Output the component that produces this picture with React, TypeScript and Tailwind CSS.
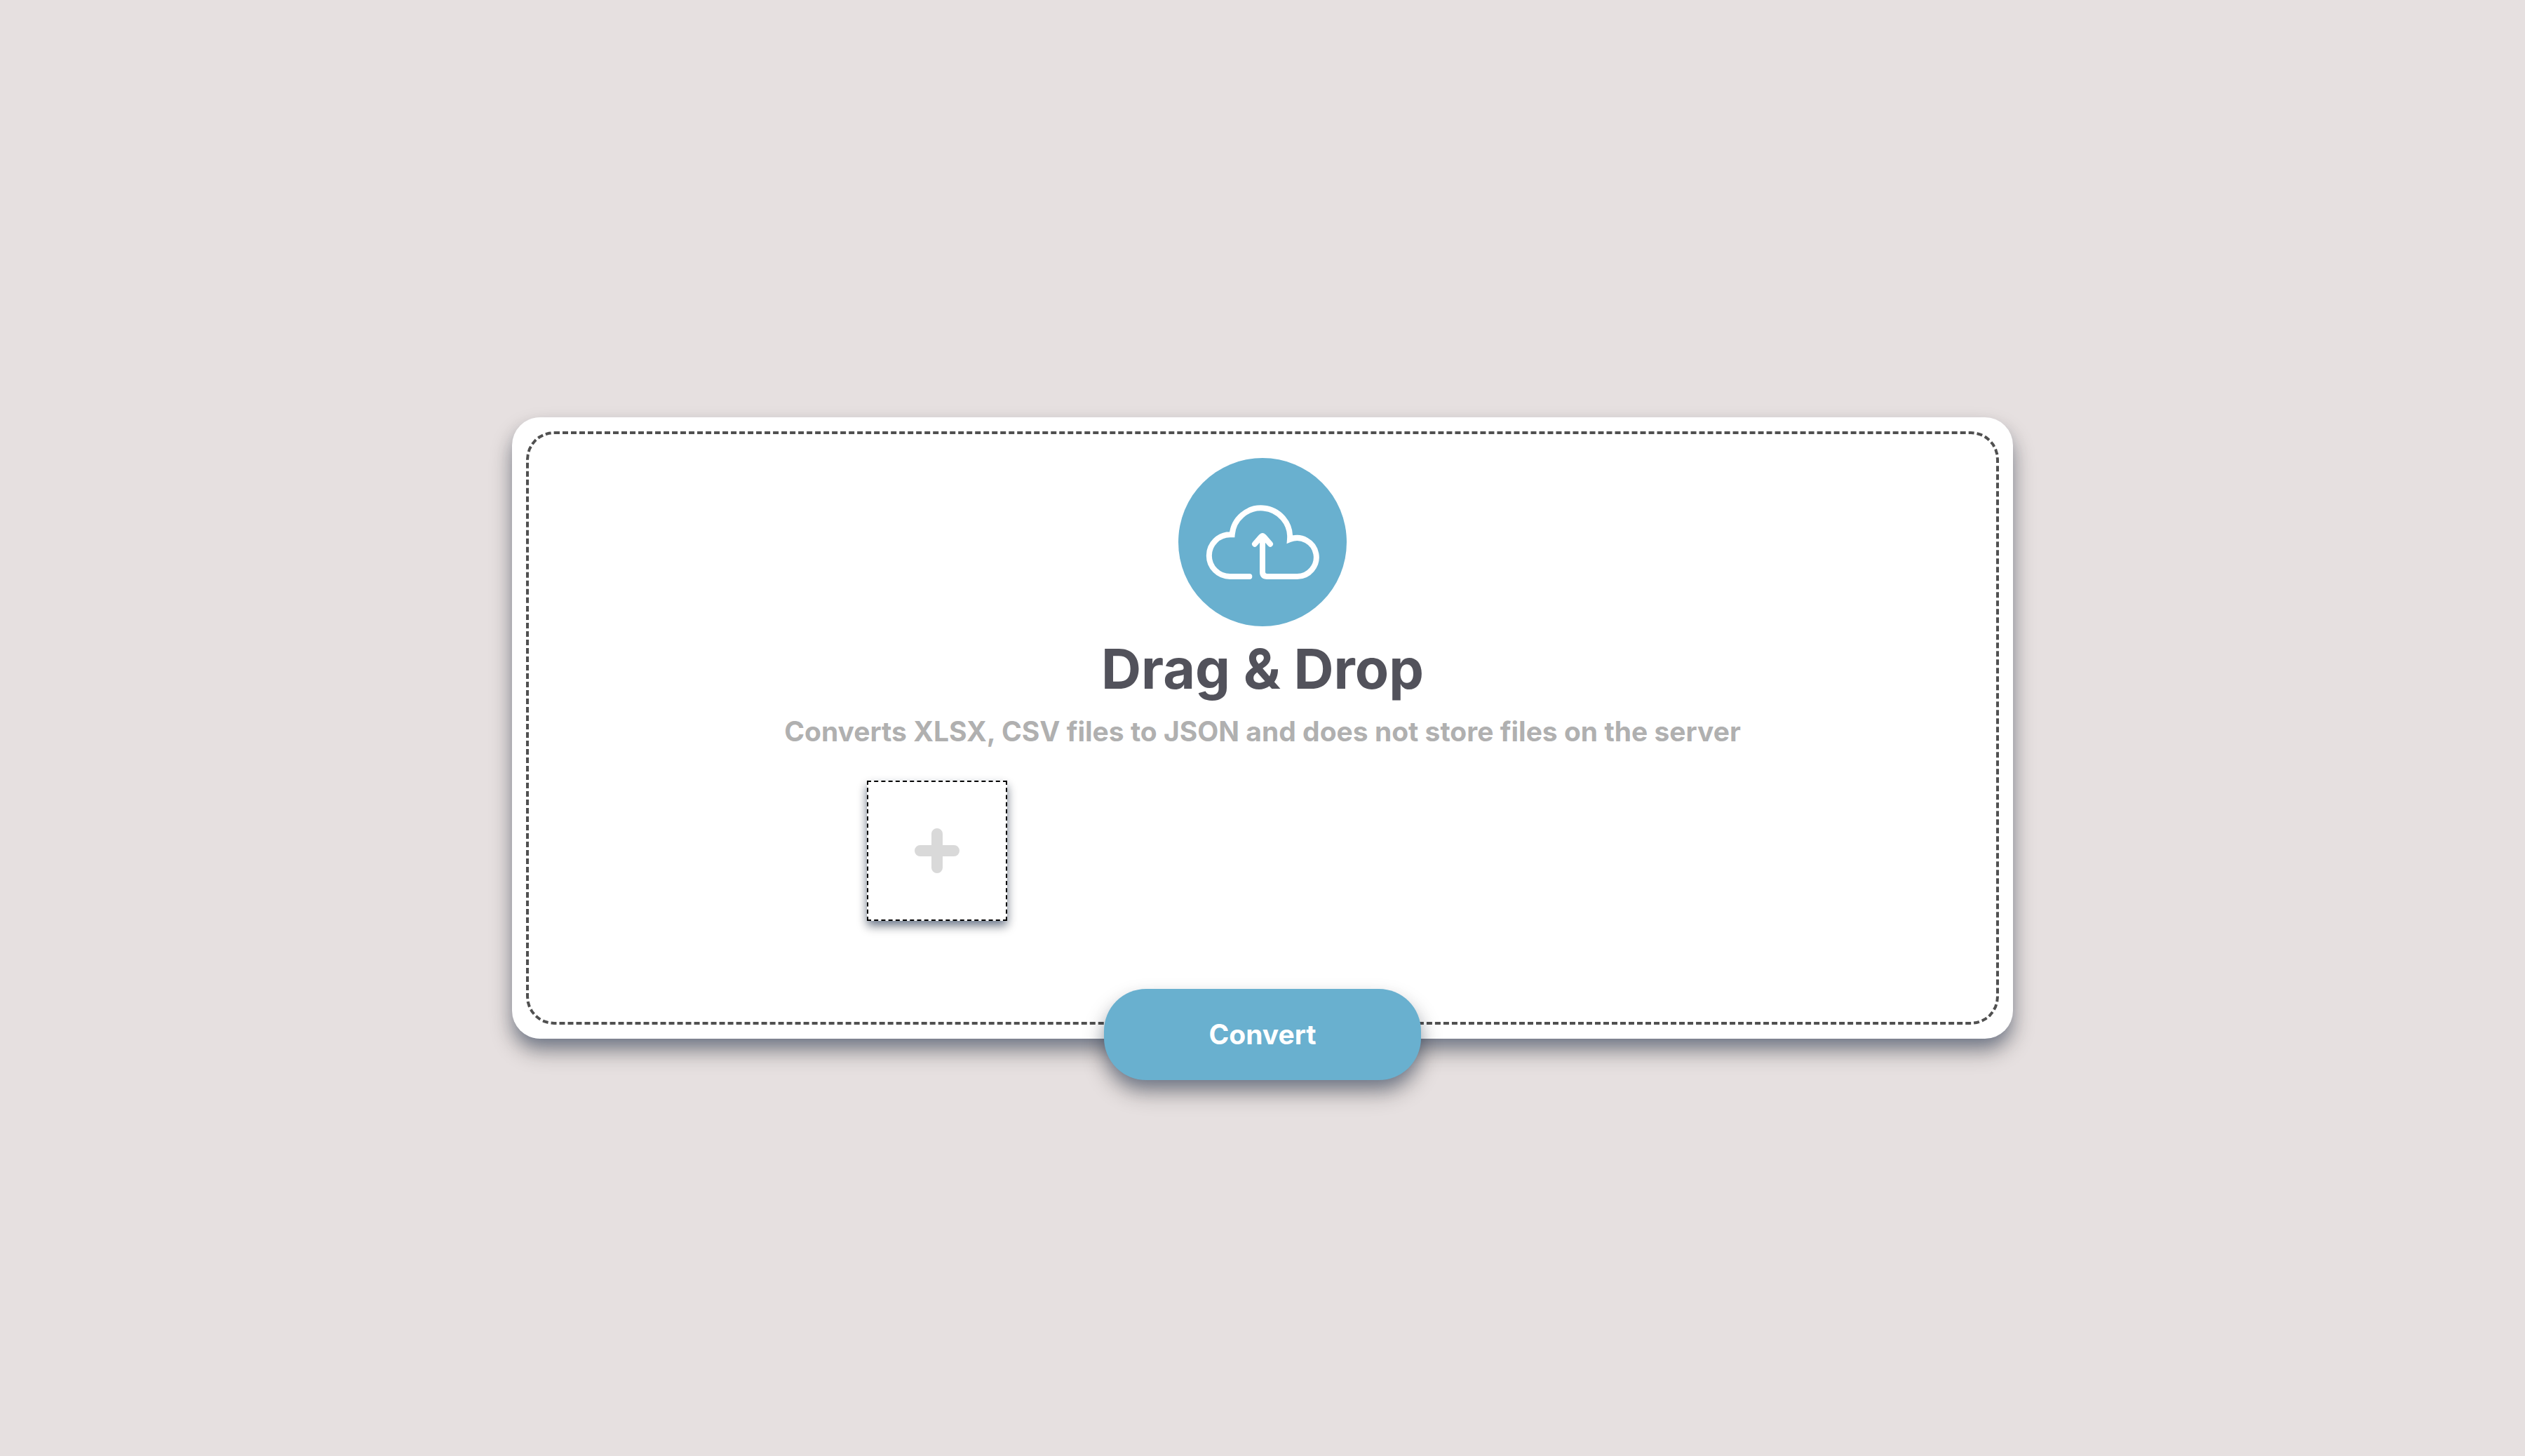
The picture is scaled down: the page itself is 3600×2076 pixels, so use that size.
import { useRef } from "react";

function CloudUploadIcon() {
  return (
    <svg
      viewBox="60 69 720 720"
      className="size-[240px]"
      fill="none"
      stroke="#fff"
      strokeWidth="24"
      strokeLinecap="round"
      aria-hidden="true"
    >
      <circle cx="420" cy="429" r="360" fill="#69b0cf" stroke="none" />
      <path
        strokeLinejoin="miter"
        d="M364 576H281A89.5 89.5 0 0 1 281 397H290A123 123 0 0 1 537 417A82.5 82.5 0 1 1 566 576H440Q420 576 420 556V404"
      />
      <path strokeLinejoin="round" d="M387 437L415 405Q420 400 425 405L453 437" />
    </svg>
  );
}

function PlusIcon() {
  return (
    <svg
      viewBox="0 0 64 64"
      className="size-16"
      fill="none"
      stroke="#d9d9d9"
      strokeWidth="16"
      strokeLinecap="round"
      aria-hidden="true"
    >
      <path d="M32 8V56M8 32H56" />
    </svg>
  );
}

export default function App() {
  const picker = useRef<HTMLInputElement>(null);

  return (
    <main className="flex min-h-screen items-center justify-center bg-[#e6e0e0] font-['Inter',sans-serif] font-bold">
      <form
        onSubmit={(e) => e.preventDefault()}
        className="relative w-full max-w-[2140px] rounded-[40px] bg-white p-5 shadow-[0_14px_24px_-6px_rgba(20,50,100,0.36),0_18px_32px_0_rgba(0,0,0,0.32)]"
      >
        <div className="flex flex-col items-center rounded-[40px] border-4 border-dashed border-[#505050] px-8 pt-[34px] pb-36">
          <CloudUploadIcon />
          <h1 className="mt-3 text-[79px] leading-[96px] text-[#52525b]">
            Drag &amp; Drop
          </h1>
          <p className="mt-[18px] text-[39px] leading-[48px] text-[#b0b0b0]">
            Converts XLSX, CSV files to JSON and does not store files on the
            server
          </p>
          <div className="mt-[46px] flex w-full max-w-[1128px] flex-wrap gap-8">
            <button
              type="button"
              aria-label="Add file"
              onClick={() => picker.current?.click()}
              className="flex size-[200px] items-center justify-center border-2 border-dashed border-black bg-white shadow-[0_6px_12px_-2px_rgba(20,50,100,0.45),0_8px_14px_0_rgba(0,0,0,0.32)]"
            >
              <PlusIcon />
            </button>
            <input
              ref={picker}
              type="file"
              accept=".xlsx,.csv"
              multiple
              hidden
              aria-label="Files"
            />
          </div>
        </div>
        <button
          type="submit"
          className="absolute top-full left-1/2 h-[130px] w-[452px] -translate-x-1/2 -translate-y-[71px] rounded-[60px] bg-[#69b0cf] text-[39px] text-white shadow-[0_14px_24px_-6px_rgba(20,50,100,0.36),0_18px_32px_0_rgba(0,0,0,0.32)]"
        >
          Convert
        </button>
      </form>
    </main>
  );
}
